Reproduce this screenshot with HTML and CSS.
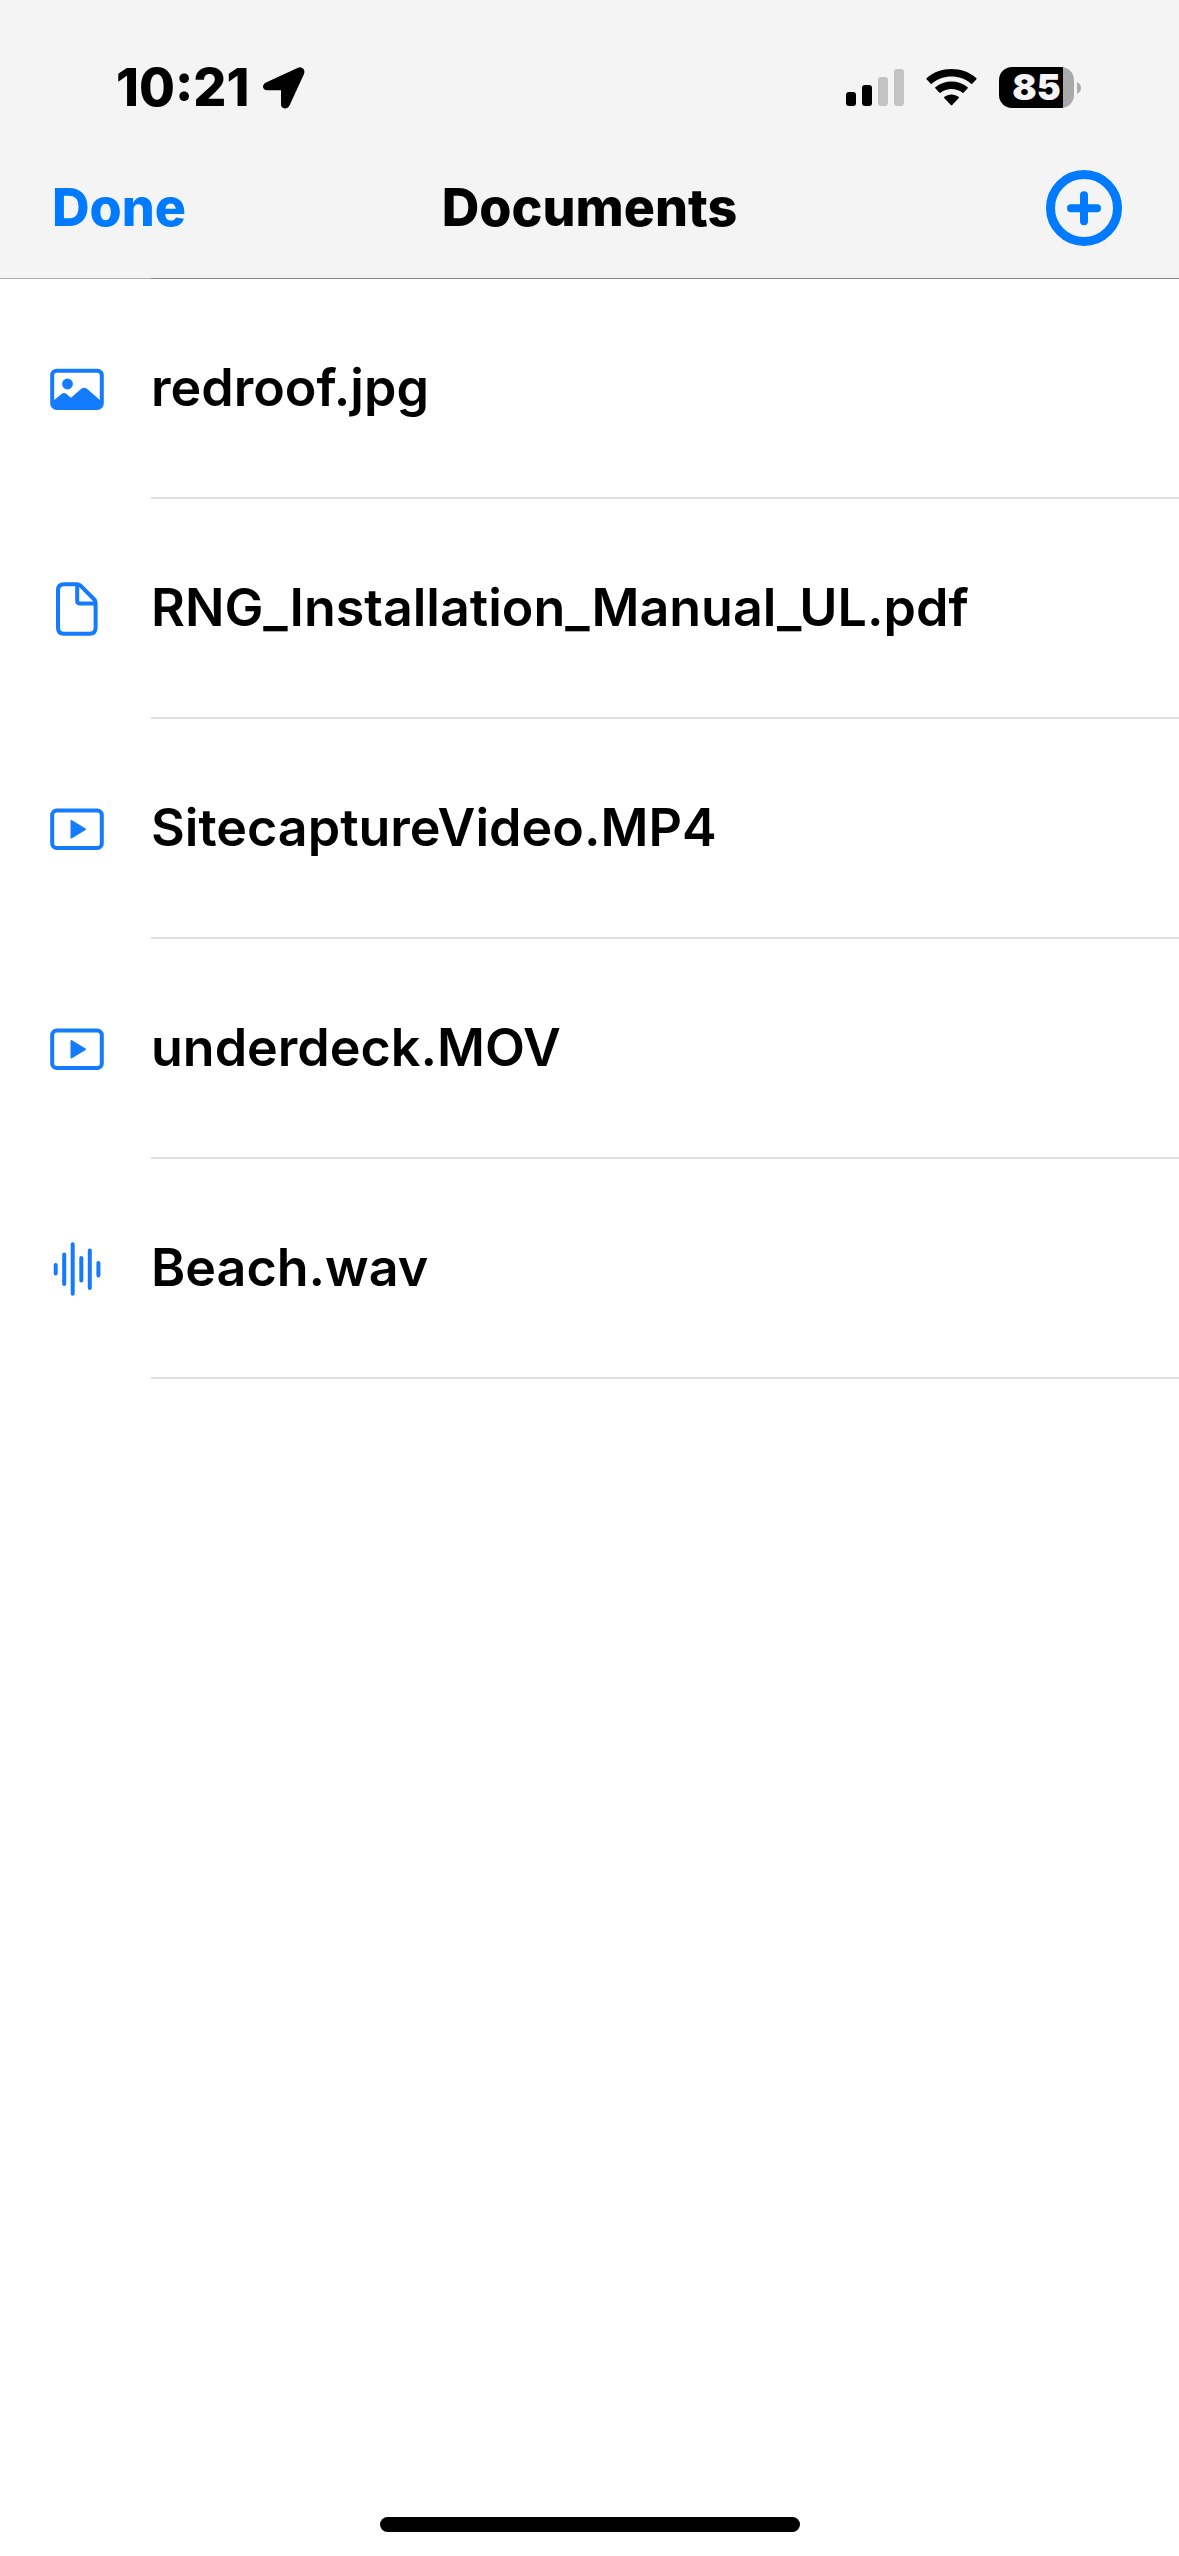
FILE: index.html
```html
<!DOCTYPE html>
<html lang="en">
<head>
<meta charset="utf-8">
<meta name="viewport" content="width=device-width, initial-scale=1">
<title>Documents</title>
<link rel="stylesheet" href="styles.css">
</head>
<body>
<div class="screen">
  <header class="top">
    <div class="status">
      <div class="status-left">
        <span class="time">10:21</span>
        <svg class="location" viewBox="0 0 42 42" aria-hidden="true"><path d="M3 15.500 35 .7Q38.500-.5 40.500 2 42 4 41 7L26.500 38.500Q25 41.500 22 41.500 18 41 18 37.500V23.200H4Q.5 23 0 20 0 17 3 15.500Z"/></svg>
      </div>
      <div class="status-right">
        <svg class="signal" viewBox="0 0 58 37" aria-hidden="true">
          <rect x="0" y="23" width="10" height="14" rx="3"/>
          <rect x="16" y="16" width="10" height="21" rx="3"/>
          <rect class="dim" x="32" y="8" width="10" height="29" rx="3"/>
          <rect class="dim" x="48" y="0" width="10" height="37" rx="3"/>
        </svg>
        <svg class="wifi" viewBox="0 0 51 37" aria-hidden="true">
          <path d="M.6 10.200Q0 9.800.6 9.200C14-3 37-3 50.400 9.200Q51 9.800 50.400 10.200L46.300 14.800Q45.700 15.200 45.200 14.800C34 5.200 17 5.200 5.800 14.800Q5.300 15.200 4.700 14.800Z"/>
          <path d="M9.300 19.300Q8.800 18.800 9.300 18.300C18.500 10.500 32.500 10.500 41.700 18.300Q42.200 18.800 41.700 19.300L37.500 23.700Q37 24.100 36.500 23.700C30 18.700 21 18.700 14.500 23.700Q14 24.100 13.500 23.700Z"/>
          <path d="M18.200 29Q17.600 28.500 18.200 28C22.400 24.500 28.600 24.500 32.800 28Q33.400 28.500 32.800 29L26.200 36Q25.500 36.700 24.800 36Z"/>
        </svg>
        <div class="battery">
          <div class="battery-body">85</div>
          <svg class="battery-tip" viewBox="0 0 4 12" aria-hidden="true"><path d="M0 0Q4 2.500 4 6 4 9.500 0 12Z"/></svg>
        </div>
      </div>
    </div>
    <nav class="bar">
      <button class="done" type="button">Done</button>
      <h1 class="title">Documents</h1>
      <button class="add" type="button" aria-label="Add document">
        <svg class="add-icon" viewBox="0 0 76 76" aria-hidden="true"><circle cx="38" cy="38" r="33.500" stroke-width="9"/><path d="M38 25.200v26M25 38.200h26" stroke-width="8"/></svg>
      </button>
    </nav>
  </header>
  <main class="content">
    <ul class="files">
      <li class="file">
        <svg class="icon" viewBox="0 0 54 54" aria-hidden="true"><rect class="line" x="2.200" y="8.700" width="49.600" height="37.200" rx="4.500"/><circle class="solid" cx="17.500" cy="22" r="5.400"/><path class="solid" d="M3 39 11.500 32Q14 30 16.500 32L21 35.800 31 27Q34 24.300 37.300 27L51 39V43Q51 47 47 47H7Q3 47 3 43Z"/></svg>
        <span class="name">redroof.jpg</span>
      </li>
      <li class="file">
        <svg class="icon" viewBox="0 0 54 54" aria-hidden="true"><path class="line" d="M14 2.200H27Q29 2.200 30.500 3.700L44.300 17.500Q45.600 18.800 45.600 21V45.800Q45.600 51.800 39.600 51.800H14Q8 51.800 8 45.800V8.200Q8 2.200 14 2.200Z"/><path class="line" d="M27.200 3V19Q27.200 21.400 29.600 21.400H45"/></svg>
        <span class="name">RNG_Installation_Manual_UL.pdf</span>
      </li>
      <li class="file">
        <svg class="icon" viewBox="0 0 54 54" aria-hidden="true"><rect class="line" x="2.200" y="8.500" width="49.600" height="37.400" rx="4.500"/><path class="solid" d="M20.500 19.200Q20.500 17.600 22 18.300L35.600 26.500Q36.800 27.300 35.600 28.100L22 36.300Q20.500 37 20.500 35.400Z"/></svg>
        <span class="name">SitecaptureVideo.MP4</span>
      </li>
      <li class="file">
        <svg class="icon" viewBox="0 0 54 54" aria-hidden="true"><rect class="line" x="2.200" y="8.500" width="49.600" height="37.400" rx="4.500"/><path class="solid" d="M20.500 19.200Q20.500 17.600 22 18.300L35.600 26.500Q36.800 27.300 35.600 28.100L22 36.300Q20.500 37 20.500 35.400Z"/></svg>
        <span class="name">underdeck.MOV</span>
      </li>
      <li class="file">
        <svg class="icon" viewBox="0 0 54 54" aria-hidden="true"><path class="line" d="M5.700 23v8.500M14.200 12.500v29.500M22.700 2.200v49.600M31.300 16v22.500M39.800 8.500v37.500M48.400 21v12.500"/></svg>
        <span class="name">Beach.wav</span>
      </li>
    </ul>
  </main>
  <footer class="foot"><div class="home"></div></footer>
</div>
</body>
</html>
```
FILE: styles.css
```css
* {
  box-sizing: border-box;
}

body {
  margin: 0;
  background: #fff;
  color: #000;
  font-family: Inter, "Liberation Sans", sans-serif;
}

.screen {
  display: flex;
  flex-direction: column;
  min-height: 100vh;
}

svg {
  display: block;
  flex: none;
}

button {
  padding: 0;
  border: 0;
  background: none;
  color: #007aff;
  font: inherit;
}

/* Status bar and navigation bar */

.top {
  position: relative;
  background: #f4f4f4;
  border-bottom: 1px solid #b0b0b0;
}

.top::after {
  content: "";
  position: absolute;
  right: 0;
  bottom: -1px;
  left: 151px;
  height: 1px;
  background: #888;
}

.status {
  display: flex;
  align-items: center;
  justify-content: space-between;
  height: 138px;
  padding: 37px 98px 0 116px;
}

.status-left,
.status-right,
.battery {
  display: flex;
  align-items: center;
}

.status-left {
  gap: 14px;
}

.status-right {
  gap: 22px;
}

.time {
  font-size: 52px;
  font-weight: 800;
  line-height: 60px;
}

.location {
  width: 42px;
  height: 42px;
}

.signal {
  width: 58px;
  height: 37px;
}

.dim {
  fill: #c3c3c3;
}

.wifi {
  width: 51px;
  height: 37px;
}

.battery {
  gap: 3px;
}

.battery-body {
  width: 75px;
  height: 41px;
  border-radius: 13px;
  background: linear-gradient(to right, #000 64px, #a9a9a9 64px);
  color: #f4f4f4;
  font-size: 36px;
  font-weight: 900;
  line-height: 41px;
  text-align: center;
}

.battery-tip {
  width: 4px;
  height: 12px;
  fill: #a9a9a9;
}

.bar {
  display: grid;
  grid-template-columns: 1fr auto 1fr;
  align-items: center;
  height: 140px;
  padding: 0 52px;
}

.title,
.done {
  margin: 0;
  font-size: 52px;
  font-weight: 800;
  line-height: 64px;
}

.done {
  justify-self: start;
}

.add {
  justify-self: end;
  margin-right: 5px;
}

.add-icon {
  width: 76px;
  height: 76px;
  fill: none;
  stroke: #007aff;
  stroke-linecap: round;
}

/* File list */

.content {
  flex: 1;
}

.files {
  margin: 0;
  padding: 0;
  list-style: none;
}

.file {
  display: flex;
  align-items: center;
  gap: 47px;
  padding-left: 50px;
}

.icon {
  width: 54px;
  height: 54px;
}

.line {
  fill: none;
  stroke: #147bfd;
  stroke-width: 4;
  stroke-linecap: round;
}

.solid {
  fill: #147bfd;
}

.name {
  flex: 1;
  border-bottom: 2px solid #e0e0e0;
  font-size: 52px;
  font-weight: 600;
  line-height: 218px;
}

.foot {
  display: flex;
  justify-content: center;
  padding-bottom: 24px;
}

.home {
  width: 420px;
  height: 15px;
  border-radius: 8px;
  background: #000;
}
```
